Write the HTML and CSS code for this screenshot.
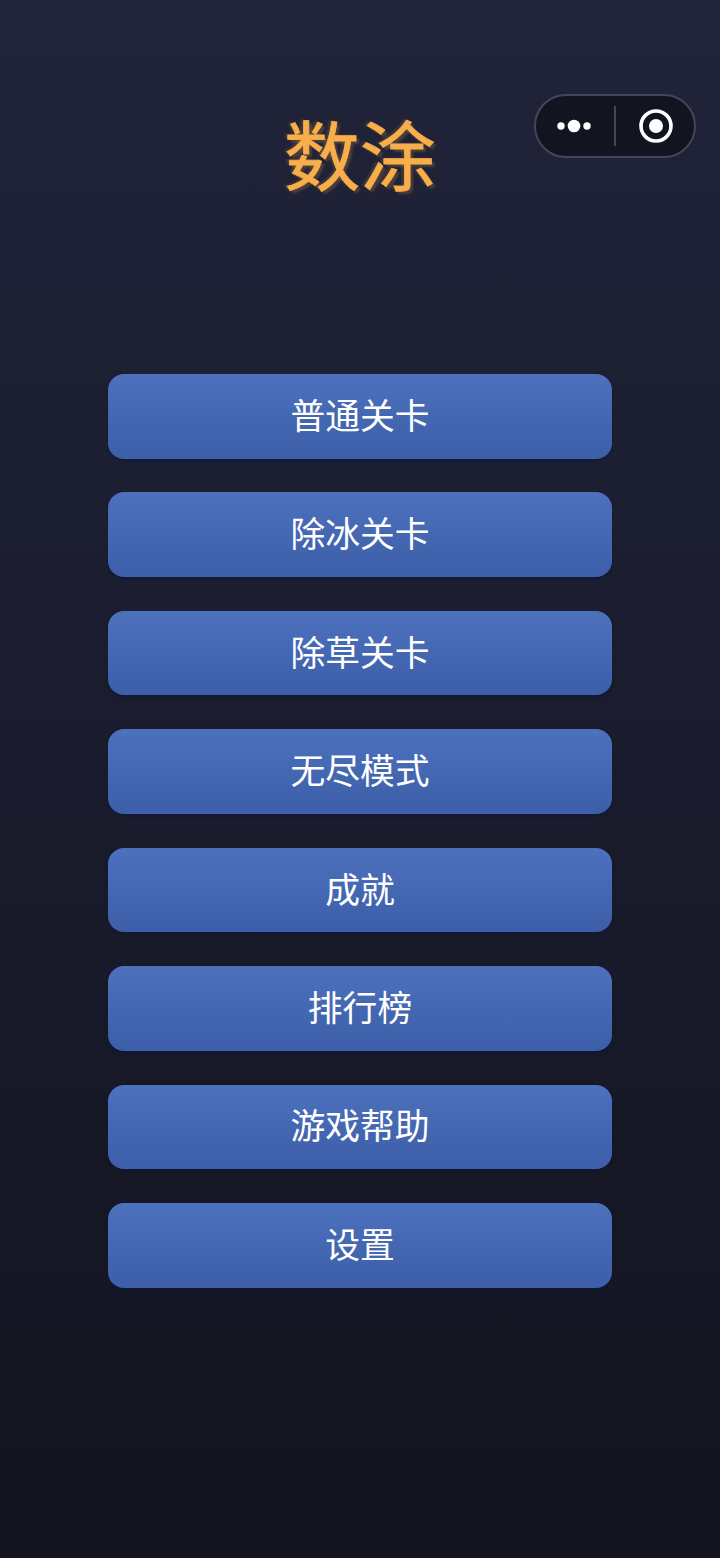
FILE: index.html
```html
<!DOCTYPE html>
<html lang="zh-CN">
<head>
    <meta charset="UTF-8">
    <meta name="viewport" content="width=device-width, initial-scale=1.0">
    <title>数涂</title>
    <link rel="stylesheet" href="styles.css">
</head>
<body>
    <!-- 小程序胶囊按钮 -->
    <div class="capsule">
        <svg class="capsule-more" width="36" height="14" viewBox="0 0 36 14">
            <circle cx="5" cy="7" r="3.7" fill="#fff"/>
            <circle cx="18" cy="7" r="6.3" fill="#fff"/>
            <circle cx="31" cy="7" r="3.7" fill="#fff"/>
        </svg>
        <div class="capsule-line"></div>
        <svg class="capsule-close" width="34" height="34" viewBox="0 0 34 34">
            <circle cx="17" cy="17" r="15" fill="none" stroke="#fff" stroke-width="3.6"/>
            <circle cx="17" cy="17" r="7" fill="#fff"/>
        </svg>
    </div>

    <h1 class="title">数涂</h1>

    <div class="menu">
        <button class="menu-btn">普通关卡</button>
        <button class="menu-btn">除冰关卡</button>
        <button class="menu-btn">除草关卡</button>
        <button class="menu-btn">无尽模式</button>
        <button class="menu-btn">成就</button>
        <button class="menu-btn">排行榜</button>
        <button class="menu-btn">游戏帮助</button>
        <button class="menu-btn">设置</button>
    </div>
</body>
</html>
```

FILE: styles.css
```css
html, body {
    height: 100%;
}
body {
    margin: 0;
    height: 1558px;
    overflow: hidden;
    background: linear-gradient(180deg, #21243a 0%, #12141f 100%);
    font-family: "Noto Sans CJK SC", "Liberation Sans", sans-serif;
    display: flex;
    flex-direction: column;
    align-items: center;
}

.title {
    margin: 96px 0 0;
    height: 112px;
    line-height: 112px;
    font-size: 76px;
    font-weight: 400;
    color: #f8ae4a;
    -webkit-text-stroke: 0.8px #f8ae4a;
    text-shadow: 3px 3px 2px rgba(248, 174, 74, 0.2), -3px -1px 2px rgba(248, 174, 74, 0.15);
}

.menu {
    margin-top: 166px;
    width: 504px;
    display: flex;
    flex-direction: column;
    gap: 33.85px;
}
.menu-btn {
    height: 84.6px;
    padding: 0 0 5px;
    border: none;
    border-radius: 16px;
    background: linear-gradient(180deg, #4c71bd 0%, #3d5ea8 100%);
    box-shadow: 0 2px 3px rgba(14, 22, 60, 0.6);
    color: #fff;
    font-family: inherit;
    font-size: 34.8px;
    font-weight: 400;
}

.capsule {
    position: absolute;
    top: 94px;
    left: 534px;
    width: 162px;
    height: 64px;
    box-sizing: border-box;
    border: 2px solid #43465a;
    border-radius: 32px;
    background-color: #12141f;
    display: flex;
    align-items: center;
    justify-content: space-between;
    padding: 0 21px 0 20px;
}
.capsule-line {
    width: 2px;
    height: 40px;
    margin-right: 2px;
    background-color: #43465a;
}
```
